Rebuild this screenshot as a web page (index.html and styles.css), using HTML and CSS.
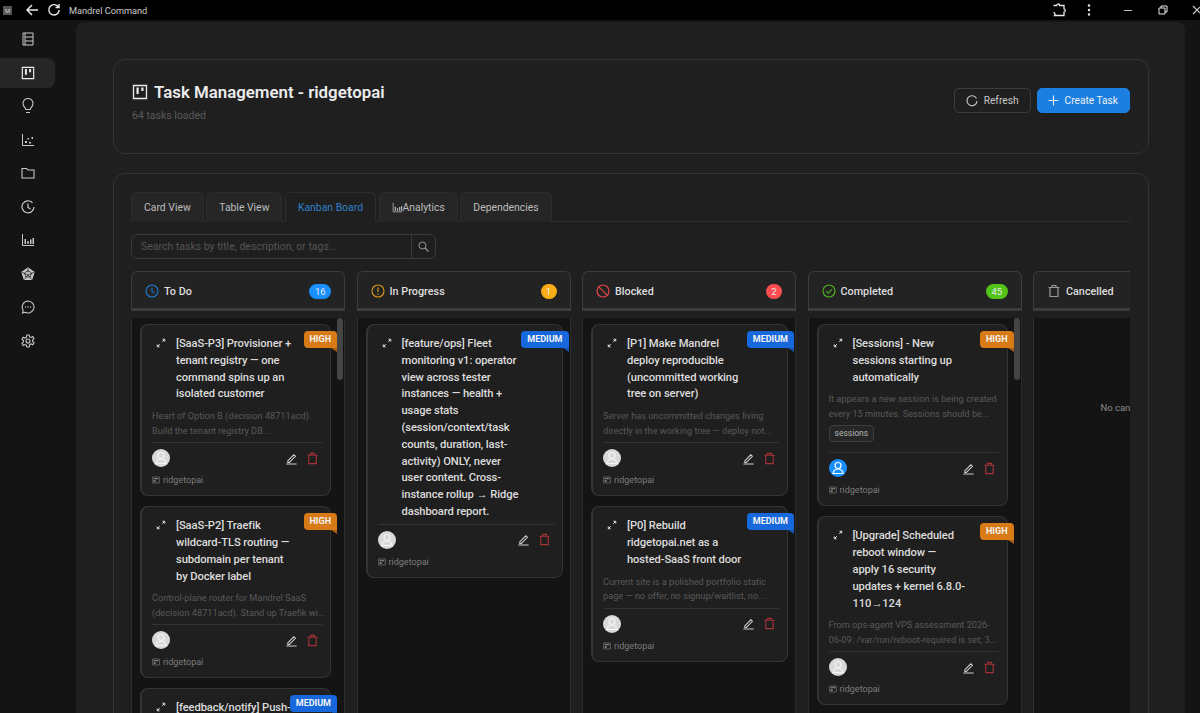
FILE: index.html
```html
<!DOCTYPE html>
<html lang="en">
<head>
  <meta charset="UTF-8">
  <title>Mandrel Command</title>
  <link rel="stylesheet" href="styles.css">
</head>
<body>
  <svg class="sprites" width="0" height="0">
    <symbol id="i-board" viewBox="0 0 16 16"><path d="M1.500 1.500h13v13h-13z" fill="none" stroke="currentColor" stroke-width="1.300"/><path d="M4.500 3.500h2.200v6.500H4.500zM9.300 3.500h2.200v3.500H9.300z" fill="currentColor"/></symbol>
    <symbol id="i-expand" viewBox="0 0 12 12"><path d="M2 10l2.500-2.500M7.500 4.500L10 2M7.800 1.500h2.700v2.700M1.500 7.800v2.700h2.700" fill="none" stroke="currentColor" stroke-width="1.200"/></symbol>
    <symbol id="i-edit" viewBox="0 0 14 14"><path d="M3 9.500L9.500 3l1.700 1.700L4.700 11.200H3zM1.500 13h11" fill="none" stroke="currentColor" stroke-width="1.100"/></symbol>
    <symbol id="i-trash" viewBox="0 0 14 14"><path d="M1.500 3.500h11M5 3.500V1.500h4v2M3 3.500v9h8v-9" fill="none" stroke="currentColor" stroke-width="1.200"/></symbol>
    <symbol id="i-user" viewBox="0 0 18 18"><circle cx="9" cy="6.500" r="3" fill="none" stroke="currentColor" stroke-width="1.200"/><path d="M4 14.500c.5-3 2.500-4.500 5-4.500s4.500 1.500 5 4.500z" fill="none" stroke="currentColor" stroke-width="1.200"/></symbol>
    <symbol id="i-project" viewBox="0 0 12 12"><path d="M1 1.500h10v9H1z" fill="none" stroke="currentColor"/><path d="M2.500 3h7v2h-7zM2.500 6h3v3h-3z" fill="currentColor"/></symbol>
  </svg>

  <div class="titlebar">
    <span class="app-logo">M</span>
    <svg class="tb-icon back" width="14" height="14" viewBox="0 0 14 14"><path d="M13 7H2M7 2L2 7l5 5" fill="none" stroke="currentColor" stroke-width="1.500"/></svg>
    <svg class="tb-icon reload" width="14" height="14" viewBox="0 0 14 14"><path d="M11.500 4.200A5.200 5.200 0 1 0 12.200 7M12 1v3.500H8.500" fill="none" stroke="currentColor" stroke-width="1.400"/></svg>
    <span class="app-name">Mandrel Command</span>
    <div class="tb-right">
      <svg class="ext" width="14" height="14" viewBox="0 0 14 14"><path d="M1.500 2.500h3.200c0-2 3-2 3 0h4.300v3.300c1.800.3 1.500 3 0 3.200v3.500H2.500c1-1.500.3-3-1-3.200" fill="none" stroke="currentColor" stroke-width="1.300"/></svg>
      <svg class="dots" width="4" height="12" viewBox="0 0 4 12"><circle cx="2" cy="1.500" r="1.200" fill="currentColor"/><circle cx="2" cy="6" r="1.200" fill="currentColor"/><circle cx="2" cy="10.500" r="1.200" fill="currentColor"/></svg>
      <span class="win-min"></span>
      <svg class="win-max" width="10" height="10" viewBox="0 0 10 10"><path d="M1 3h6v6H1zM3 3V1h6v6H7" fill="none" stroke="currentColor"/></svg>
      <svg class="win-close" width="10" height="10" viewBox="0 0 10 10"><path d="M1 1l8 8M9 1l-8 8" fill="none" stroke="#ccc" stroke-width="1.200"/></svg>
    </div>
  </div>

  <div class="shell">
    <nav class="sidebar">
      <a class="nav-item"><svg width="14" height="14" viewBox="0 0 14 14"><path d="M2 1h10v12H2zM4 5h8M4 9h8M4 1v12" fill="none" stroke="currentColor"/></svg></a>
      <a class="nav-item active"><svg width="14" height="14"><use href="#i-board"/></svg></a>
      <a class="nav-item"><svg width="14" height="16" viewBox="0 0 14 16"><path d="M4.800 11.500c0-2-2.800-2.700-2.800-6a5 5 0 0 1 10 0c0 3.300-2.800 4-2.800 6zM5 14.500h4" fill="none" stroke="currentColor" stroke-width="1.100"/></svg></a>
      <a class="nav-item"><svg width="14" height="14" viewBox="0 0 14 14"><path d="M1.500 1v11.500H13" fill="none" stroke="currentColor"/><path d="M4 8h2v2H4zM8 9h2v1.500H8zM6.500 5h1.500v1.500H6.500zM10.500 4h1.500v2h-1.500z" fill="currentColor"/></svg></a>
      <a class="nav-item"><svg width="14" height="14" viewBox="0 0 14 14"><path d="M1 2.500h4.500L7 4h6v8H1z" fill="none" stroke="currentColor" stroke-width="1.100"/></svg></a>
      <a class="nav-item"><svg width="14" height="14" viewBox="0 0 14 14"><path d="M11.500 2.800A6 6 0 1 0 13 7M7 3.500V7.500l2.500 1.500" fill="none" stroke="currentColor" stroke-width="1.200"/></svg></a>
      <a class="nav-item"><svg width="14" height="14" viewBox="0 0 14 14"><path d="M1.500 1v11.500H13" fill="none" stroke="currentColor"/><path d="M3.500 6h1.500v5H3.500zM6.300 8h1.500v3H6.300zM9 6.500h1.500V11H9zM11.500 5H13v6h-1.500z" fill="currentColor"/></svg></a>
      <a class="nav-item"><svg width="14" height="14" viewBox="0 0 14 14"><path d="M7 1l6 4.300-2.300 7.200H3.300L1 5.300z" fill="currentColor" stroke="currentColor" stroke-width="1.200"/><path d="M7 1v4.500M1 5.300L7 8l6-2.700M3.300 12.500L7 8l3.700 4.500M3.500 5.900L7 3.500l3.500 2.400-1.300 4.100H4.800z" fill="none" stroke="#141414" stroke-width=".7"/></svg></a>
      <a class="nav-item"><svg width="14" height="14" viewBox="0 0 14 14"><path d="M7 1a6 6 0 1 1-2.800 11.300L1.500 13l.7-2.700A6 6 0 0 1 7 1z" fill="none" stroke="currentColor" stroke-width="1.100"/><circle cx="4.500" cy="7" r=".7" fill="currentColor"/><circle cx="7" cy="7" r=".7" fill="currentColor"/><circle cx="9.500" cy="7" r=".7" fill="currentColor"/></svg></a>
      <a class="nav-item"><svg width="14" height="14" viewBox="0 0 14 14"><path d="M5.800 1h2.400l.4 1.800 1.500.7 1.700-.9 1.200 2-1.400 1.300v1.600l1.400 1.300-1.200 2-1.700-.9-1.500.7L8.200 13H5.800l-.4-1.800-1.500-.7-1.700.9-1.200-2 1.400-1.300V6.500L1 5.200l1.200-2 1.700.9 1.500-.7z" fill="none" stroke="currentColor" stroke-width="1.100"/><circle cx="7" cy="7" r="2" fill="none" stroke="currentColor" stroke-width="1.100"/></svg></a>
    </nav>

    <main class="panel">
      <section class="box header-box">
        <div class="header-text">
          <h1><svg width="16" height="16"><use href="#i-board"/></svg>Task Management - ridgetopai</h1>
          <p>64 tasks loaded</p>
        </div>
        <div class="header-actions">
          <button class="btn"><svg width="12" height="12" viewBox="0 0 12 12"><path d="M10.500 3.500A5 5 0 1 0 11 6" fill="none" stroke="currentColor" stroke-width="1.100"/></svg>Refresh</button>
          <button class="btn btn-primary"><svg width="11" height="11" viewBox="0 0 11 11"><path d="M5.500.500v10M.500 5.500h10" stroke="currentColor" stroke-width="1.100"/></svg>Create Task</button>
        </div>
      </section>

      <section class="box board-box">
        <div class="tabs">
          <div class="tab">Card View</div>
          <div class="tab">Table View</div>
          <div class="tab active">Kanban Board</div>
          <div class="tab"><svg width="11" height="11" viewBox="0 0 14 14"><path d="M1.500 1v11.500H13" fill="none" stroke="currentColor"/><path d="M3.500 6h1.500v5H3.500zM6.300 8h1.500v3H6.300zM9 6.500h1.500V11H9zM11.500 5H13v6h-1.500z" fill="currentColor"/></svg>Analytics</div>
          <div class="tab">Dependencies</div>
        </div>

        <div class="search">
          <span class="search-input">Search tasks by title, description, or tags...</span>
          <span class="search-btn"><svg width="11" height="11" viewBox="0 0 11 11"><circle cx="4.500" cy="4.500" r="3.500" fill="none" stroke="currentColor"/><path d="M7 7l3.500 3.500" stroke="currentColor" stroke-width="1.200"/></svg></span>
        </div>

        <div class="board">
          <!-- To Do -->
          <div class="column">
            <div class="col-head">
              <svg class="todo-icon" width="14" height="14" viewBox="0 0 14 14"><circle cx="7" cy="7" r="6" fill="none" stroke="currentColor" stroke-width="1.100"/><path d="M7 3.500V7.500l2.500 1.500" fill="none" stroke="currentColor" stroke-width="1.100"/></svg>
              <span class="col-title">To Do</span>
              <span class="count count-blue">16</span>
            </div>
            <div class="col-body has-scroll">
              <span class="scroll-thumb"></span>
              <article class="card">
                <span class="ribbon ribbon-high">HIGH</span>
                <div class="card-title"><svg class="expand" width="10" height="10"><use href="#i-expand"/></svg><h3>[SaaS-P3] Provisioner +<br>tenant registry — one<br>command spins up an<br>isolated customer</h3></div>
                <p class="desc">Heart of Option B (decision 48711acd).<br>Build the tenant registry DB...</p>
                <div class="card-foot"><span class="avatar"><svg width="18" height="18"><use href="#i-user"/></svg></span><svg class="edit" width="13" height="13"><use href="#i-edit"/></svg><svg class="trash" width="13" height="13"><use href="#i-trash"/></svg></div>
                <div class="owner"><svg width="8" height="8"><use href="#i-project"/></svg>ridgetopai</div>
              </article>
              <article class="card">
                <span class="ribbon ribbon-high">HIGH</span>
                <div class="card-title"><svg class="expand" width="10" height="10"><use href="#i-expand"/></svg><h3>[SaaS-P2] Traefik<br>wildcard-TLS routing —<br>subdomain per tenant<br>by Docker label</h3></div>
                <p class="desc">Control-plane router for Mandrel SaaS<br>(decision 48711acd). Stand up Traefik wi...</p>
                <div class="card-foot"><span class="avatar"><svg width="18" height="18"><use href="#i-user"/></svg></span><svg class="edit" width="13" height="13"><use href="#i-edit"/></svg><svg class="trash" width="13" height="13"><use href="#i-trash"/></svg></div>
                <div class="owner"><svg width="8" height="8"><use href="#i-project"/></svg>ridgetopai</div>
              </article>
              <article class="card">
                <span class="ribbon ribbon-medium">MEDIUM</span>
                <div class="card-title"><svg class="expand" width="10" height="10"><use href="#i-expand"/></svg><h3>[feedback/notify] Push-</h3></div>
              </article>
            </div>
          </div>

          <!-- In Progress -->
          <div class="column">
            <div class="col-head">
              <svg class="progress-icon" width="14" height="14" viewBox="0 0 14 14"><circle cx="7" cy="7" r="6" fill="none" stroke="currentColor" stroke-width="1.100"/><path d="M7 3.500v4.500M7 9.500v1.200" stroke="currentColor" stroke-width="1.200"/></svg>
              <span class="col-title">In Progress</span>
              <span class="count count-amber">1</span>
            </div>
            <div class="col-body">
              <article class="card">
                <span class="ribbon ribbon-medium">MEDIUM</span>
                <div class="card-title"><svg class="expand" width="10" height="10"><use href="#i-expand"/></svg><h3>[feature/ops] Fleet<br>monitoring v1: operator<br>view across tester<br>instances — health +<br>usage stats<br>(session/context/task<br>counts, duration, last-<br>activity) ONLY, never<br>user content. Cross-<br>instance rollup → Ridge<br>dashboard report.</h3></div>
                <div class="card-foot"><span class="avatar"><svg width="18" height="18"><use href="#i-user"/></svg></span><svg class="edit" width="13" height="13"><use href="#i-edit"/></svg><svg class="trash" width="13" height="13"><use href="#i-trash"/></svg></div>
                <div class="owner"><svg width="8" height="8"><use href="#i-project"/></svg>ridgetopai</div>
              </article>
            </div>
          </div>

          <!-- Blocked -->
          <div class="column">
            <div class="col-head">
              <svg class="blocked-icon" width="14" height="14" viewBox="0 0 14 14"><circle cx="7" cy="7" r="6" fill="none" stroke="currentColor" stroke-width="1.200"/><path d="M2.800 2.800l8.400 8.400" stroke="currentColor" stroke-width="1.200"/></svg>
              <span class="col-title">Blocked</span>
              <span class="count count-red">2</span>
            </div>
            <div class="col-body">
              <article class="card">
                <span class="ribbon ribbon-medium">MEDIUM</span>
                <div class="card-title"><svg class="expand" width="10" height="10"><use href="#i-expand"/></svg><h3>[P1] Make Mandrel<br>deploy reproducible<br>(uncommitted working<br>tree on server)</h3></div>
                <p class="desc">Server has uncommitted changes living<br>directly in the working tree — deploy not...</p>
                <div class="card-foot"><span class="avatar"><svg width="18" height="18"><use href="#i-user"/></svg></span><svg class="edit" width="13" height="13"><use href="#i-edit"/></svg><svg class="trash" width="13" height="13"><use href="#i-trash"/></svg></div>
                <div class="owner"><svg width="8" height="8"><use href="#i-project"/></svg>ridgetopai</div>
              </article>
              <article class="card">
                <span class="ribbon ribbon-medium">MEDIUM</span>
                <div class="card-title"><svg class="expand" width="10" height="10"><use href="#i-expand"/></svg><h3>[P0] Rebuild<br>ridgetopai.net as a<br>hosted-SaaS front door</h3></div>
                <p class="desc">Current site is a polished portfolio static<br>page — no offer, no signup/waitlist, no...</p>
                <div class="card-foot"><span class="avatar"><svg width="18" height="18"><use href="#i-user"/></svg></span><svg class="edit" width="13" height="13"><use href="#i-edit"/></svg><svg class="trash" width="13" height="13"><use href="#i-trash"/></svg></div>
                <div class="owner"><svg width="8" height="8"><use href="#i-project"/></svg>ridgetopai</div>
              </article>
            </div>
          </div>

          <!-- Completed -->
          <div class="column">
            <div class="col-head">
              <svg class="done-icon" width="14" height="14" viewBox="0 0 14 14"><circle cx="7" cy="7" r="6" fill="none" stroke="currentColor" stroke-width="1.100"/><path d="M4.300 7.200l2 2 3.500-3.800" fill="none" stroke="currentColor" stroke-width="1.100"/></svg>
              <span class="col-title">Completed</span>
              <span class="count count-green">45</span>
            </div>
            <div class="col-body has-scroll">
              <span class="scroll-thumb"></span>
              <article class="card">
                <span class="ribbon ribbon-high">HIGH</span>
                <div class="card-title"><svg class="expand" width="10" height="10"><use href="#i-expand"/></svg><h3>[Sessions] - New<br>sessions starting up<br>automatically</h3></div>
                <p class="desc">It appears a new session is being created<br>every 15 minutes. Sessions should be...</p>
                <span class="tag">sessions</span>
                <div class="card-foot"><span class="avatar avatar-blue"><svg width="18" height="18"><use href="#i-user"/></svg></span><svg class="edit" width="13" height="13"><use href="#i-edit"/></svg><svg class="trash" width="13" height="13"><use href="#i-trash"/></svg></div>
                <div class="owner"><svg width="8" height="8"><use href="#i-project"/></svg>ridgetopai</div>
              </article>
              <article class="card">
                <span class="ribbon ribbon-high">HIGH</span>
                <div class="card-title"><svg class="expand" width="10" height="10"><use href="#i-expand"/></svg><h3>[Upgrade] Scheduled<br>reboot window —<br>apply 16 security<br>updates + kernel 6.8.0-<br>110→124</h3></div>
                <p class="desc">From ops-agent VPS assessment 2026-<br>06-09. /var/run/reboot-required is set; 3...</p>
                <div class="card-foot"><span class="avatar"><svg width="18" height="18"><use href="#i-user"/></svg></span><svg class="edit" width="13" height="13"><use href="#i-edit"/></svg><svg class="trash" width="13" height="13"><use href="#i-trash"/></svg></div>
                <div class="owner"><svg width="8" height="8"><use href="#i-project"/></svg>ridgetopai</div>
              </article>
            </div>
          </div>

          <!-- Cancelled -->
          <div class="column">
            <div class="col-head">
              <svg class="cancel-icon" width="14" height="14"><use href="#i-trash"/></svg>
              <span class="col-title">Cancelled</span>
            </div>
            <div class="col-body col-empty">
              <svg width="22" height="22" viewBox="0 0 22 22"><path d="M.5 11L8 4h6l7.500 7-7.500 7H8z" fill="none" stroke="currentColor"/></svg>
              <span>No cancelled tasks</span>
            </div>
          </div>
        </div>
      </section>
    </main>
  </div>
</body>
</html>
```

FILE: styles.css
```css
* {
  box-sizing: border-box;
}

html, body {
  height: 713px;
  overflow: hidden;
}

body {
  margin: 0;
  background: #141414;
  color: #e0e0e0;
  font-family: Roboto, "Noto Sans", sans-serif;
}

.sprites {
  display: block;
  height: 0;
}

/* title bar */
.titlebar {
  display: flex;
  align-items: center;
  height: 20px;
  background: #000;
  color: #e8e8e8;
}

.app-logo {
  width: 9px;
  height: 9px;
  margin-left: 3px;
  background: #555;
  color: #ccc;
  font-size: 6px;
  line-height: 9px;
  text-align: center;
}

.back {
  margin-left: 13px;
}

.reload {
  margin-left: 8px;
}

.app-name {
  margin-left: 8px;
  font-size: 9.200px;
  color: #ccc;
}

.tb-right {
  display: flex;
  align-items: center;
  margin-left: auto;
  width: 148px;
}

.tb-right svg,
.win-min {
  flex-shrink: 0;
}

.dots {
  margin-left: 21px;
}

.win-min {
  width: 8px;
  height: 1px;
  margin-left: 33px;
  background: #bbb;
}

.win-max {
  margin-left: 26px;
}

.win-close {
  margin-left: 24px;
}

/* shell */
.shell {
  display: flex;
  height: 693px;
}

.sidebar {
  width: 76px;
  flex-shrink: 0;
  padding-top: 4px;
}

.nav-item {
  display: flex;
  align-items: center;
  justify-content: center;
  width: 55px;
  height: 30px;
  margin-bottom: 3.500px;
  color: #c8c8c8;
  border-radius: 0 8px 8px 0;
}

.nav-item.active {
  background: #262626;
  color: #eee;
}

.panel {
  width: 1109px;
  height: 720px;
  margin-top: 2px;
  padding: 37px 36px 0 37px;
  background: #1f1f1f;
  border-radius: 8px 8px 0 0;
}

.box {
  border: 1px solid #333;
  border-radius: 12px;
}

.header-box {
  display: flex;
  justify-content: space-between;
  height: 95px;
  padding: 22px 18px 0 18px;
}

.header-box h1 {
  display: flex;
  align-items: center;
  gap: 6px;
  margin: 0;
  font-size: 16.850px;
  font-weight: 600;
  line-height: 20px;
  color: #ececec;
}

.header-box p {
  margin: 7px 0 0;
  font-size: 10.500px;
  color: #5a5a5a;
}

.header-actions {
  display: flex;
  gap: 6px;
  padding-top: 6px;
}

.btn {
  display: flex;
  align-items: center;
  gap: 6px;
  height: 25px;
  padding: 0 11px;
  background: #1f1f1f;
  border: 1px solid #3d3d3d;
  border-radius: 5px;
  color: #c8c8c8;
  font-family: inherit;
  font-size: 10.200px;
}

.btn-primary {
  padding: 0 11px 0 10px;
  background: #1a7fe0;
  border-color: #1a7fe0;
  color: #f0f0f0;
}

.board-box {
  height: 600px;
  margin-top: 19px;
  padding: 18px 18px 0 17px;
}

/* tabs */
.tabs {
  display: flex;
  gap: 2.500px;
  height: 30px;
  border-bottom: 1px solid #303030;
}

.tab {
  display: flex;
  align-items: center;
  justify-content: center;
  height: 30px;
  padding: 0 12px;
  background: #262626;
  border: 1px solid #2d2d2d;
  border-bottom: 0;
  border-radius: 6px 6px 0 0;
  color: #bdbdbd;
  font-size: 10.400px;
}

.tab.active {
  background: #1f1f1f;
  color: #2f7fc9;
}

.search {
  display: flex;
  width: 305px;
  height: 25px;
  margin-top: 12px;
  border: 1px solid #3a3a3a;
  border-radius: 6px;
}

.search-input {
  flex: 1;
  padding-left: 9px;
  color: #555;
  font-size: 10.500px;
  line-height: 23px;
}

.search-btn {
  display: flex;
  align-items: center;
  justify-content: center;
  width: 24px;
  border-left: 1px solid #3a3a3a;
  color: #999;
}

/* board */
.board {
  display: flex;
  gap: 11.500px;
  margin-top: 12px;
  overflow: hidden;
  height: 460px;
}

.column {
  width: 214px;
  flex-shrink: 0;
}

.col-head {
  display: flex;
  align-items: center;
  height: 40px;
  padding: 2px 13px 0;
  background: #232323;
  border: 1px solid #3c3c3c;
  border-bottom-width: 3px;
  border-radius: 6px 6px 0 0;
}

.col-title {
  margin-left: 5px;
  font-size: 10.800px;
  font-weight: 500;
  color: #dedede;
}

.count {
  margin-left: auto;
  min-width: 16px;
  height: 15px;
  padding: 0 6px;
  border-radius: 8px;
  color: #e8e8e8;
  font-size: 9.500px;
  line-height: 15px;
  text-align: center;
}

.count-blue { background: #1890ff; width: 22px; }
.count-amber { background: #faad14; padding: 0; }
.count-red { background: #ff4d4f; padding: 0; }
.count-green { background: #52c41a; width: 22px; }

.todo-icon { color: #1f7ad1; }
.progress-icon { color: #d99a14; }
.blocked-icon { color: #e0444a; }
.done-icon { color: #52b01f; }
.cancel-icon { color: #9a9a9a; }

.col-body {
  position: relative;
  display: flex;
  flex-direction: column;
  gap: 10px;
  height: 420px;
  margin-top: 7px;
  padding: 6px 7px 0 8px;
  background: #141414;
  border-left: 1px solid #2c2c2c;
  border-right: 1px solid #2c2c2c;
}

.col-body.has-scroll {
  padding-right: 13px;
}

.scroll-thumb {
  position: absolute;
  top: 0;
  right: 1px;
  width: 6px;
  height: 62px;
  background: #444;
  border-radius: 3px;
}

.col-empty {
  align-items: center;
  gap: 22px;
  padding-top: 40px;
  color: #8a8a8a;
  font-size: 9.500px;
}

/* cards */
.card {
  position: relative;
  flex-shrink: 0;
  padding: 11px 8px 8px 10px;
  background: #1f1f1f;
  border: 1px solid #343434;
  border-left-width: 2px;
  border-radius: 8px;
}

.card-title {
  display: flex;
}

.expand {
  width: 10px;
  margin: 2px 10px 0 4px;
  flex-shrink: 0;
  color: #e6e6e6;
}

.card-title h3 {
  margin: 0;
  font-size: 11.200px;
  font-weight: 500;
  letter-spacing: -0.1px;
  line-height: 16.800px;
  color: #dcdcdc;
  white-space: nowrap;
}

.desc {
  margin: 6px 0 0;
  color: #595959;
  font-size: 9.200px;
  line-height: 14.500px;
  white-space: nowrap;
}

.tag {
  display: inline-block;
  height: 17px;
  margin-top: 4px;
  padding: 0 5px;
  background: #262626;
  border: 1px solid #3e3e3e;
  border-radius: 4px;
  color: #b5b5b5;
  font-size: 8.500px;
  line-height: 15px;
}

.card-foot {
  display: flex;
  align-items: center;
  margin-top: 4px;
  padding-top: 6px;
  border-top: 1px solid #333;
}

.card-title + .card-foot {
  margin-top: 3px;
}

.tag + .card-foot {
  margin-top: 10px;
}

.avatar {
  display: flex;
  width: 18px;
  height: 18px;
  background: #d9d9d9;
  border-radius: 50%;
  color: #f4f4f4;
}

.avatar-blue {
  background: #1890ff;
  color: #fff;
}

.edit {
  margin-left: auto;
  color: #d0d0d0;
}

.trash {
  margin: 0 3px 0 8px;
  color: #a83238;
}

.owner {
  display: flex;
  align-items: center;
  gap: 3px;
  margin-top: 6px;
  color: #7c7c7c;
  font-size: 9px;
  line-height: 14px;
}

.ribbon {
  position: absolute;
  top: 6px;
  right: -7px;
  height: 17px;
  padding: 0 6px;
  border-radius: 4px 4px 0 4px;
  color: #f3f3f3;
  font-size: 9px;
  font-weight: 700;
  line-height: 17px;
}

.ribbon::after {
  content: "";
  position: absolute;
  right: 0;
  bottom: -4px;
  border-top: 4px solid;
  border-left: 6px solid transparent;
}

.ribbon-high { background: #d87a16; }
.ribbon-high::after { border-top-color: #a85e12; }
.ribbon-medium { background: #1668dc; }
.ribbon-medium::after { border-top-color: #1554ad; }
```
